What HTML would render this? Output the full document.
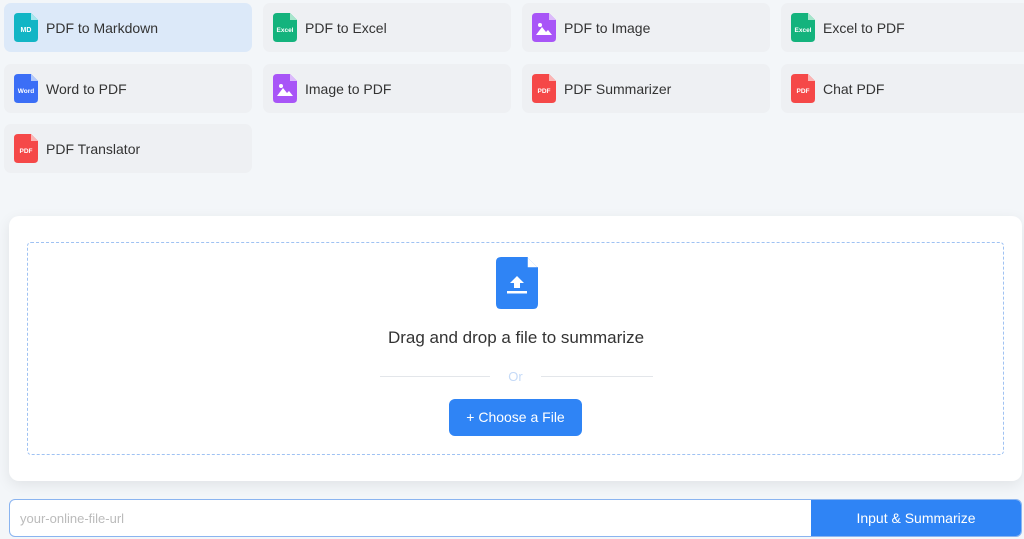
<!DOCTYPE html>
<html><head><meta charset="utf-8"><style>
body{margin:0;width:1024px;height:539px;background:#f3f6f9;font-family:"Liberation Sans",sans-serif;position:relative;overflow:hidden}
.c{position:absolute;width:248px;height:49px;background:#eef0f3;border-radius:7px;box-sizing:border-box}
.c.a{background:#dce9f9}
.c span{position:absolute;left:42px;top:17px;font-size:14px;color:#333}
.c svg{position:absolute;left:10px;top:10px}
.panel{position:absolute;left:9px;top:216px;width:1013px;height:265px;background:#fff;border-radius:10px;box-shadow:0 4px 14px rgba(0,0,0,.08)}
.dash{position:absolute;left:18px;top:26px;width:977px;height:213px;border:1px dashed #9fc2f3;border-radius:4px;box-sizing:border-box}
</style></head><body>
<div class="c a" style="left:4px;top:3px"><svg width="24" height="29" viewBox="0 0 24 29"><path d="M4 0H17L24 7V25Q24 29 20 29H4Q0 29 0 25V4Q0 0 4 0Z" fill="#12b5c5"/><path d="M17 0V7H24Z" fill="#a7e7ee"/><text x="12" y="19" font-size="7" font-weight="bold" fill="#fff" text-anchor="middle" font-family="Liberation Sans">MD</text></svg><span>PDF to Markdown</span></div>
<div class="c" style="left:263px;top:3px"><svg width="24" height="29" viewBox="0 0 24 29"><path d="M4 0H17L24 7V25Q24 29 20 29H4Q0 29 0 25V4Q0 0 4 0Z" fill="#14b37d"/><path d="M17 0V7H24Z" fill="#a6e6cc"/><text x="12" y="19" font-size="6.5" font-weight="bold" fill="#fff" text-anchor="middle" font-family="Liberation Sans">Excel</text></svg><span>PDF to Excel</span></div>
<div class="c" style="left:522px;top:3px"><svg width="24" height="29" viewBox="0 0 24 29"><path d="M4 0H17L24 7V25Q24 29 20 29H4Q0 29 0 25V4Q0 0 4 0Z" fill="#a855f7"/><path d="M17 0V7H24Z" fill="#dcbafc"/><circle cx="8" cy="12" r="2" fill="#fff"/><path d="M4 22L10 14L14 19L16 17L20 22Z" fill="#fff"/></svg><span>PDF to Image</span></div>
<div class="c" style="left:781px;top:3px"><svg width="24" height="29" viewBox="0 0 24 29"><path d="M4 0H17L24 7V25Q24 29 20 29H4Q0 29 0 25V4Q0 0 4 0Z" fill="#14b37d"/><path d="M17 0V7H24Z" fill="#a6e6cc"/><text x="12" y="19" font-size="6.5" font-weight="bold" fill="#fff" text-anchor="middle" font-family="Liberation Sans">Excel</text></svg><span>Excel to PDF</span></div>
<div class="c" style="left:4px;top:64px"><svg width="24" height="29" viewBox="0 0 24 29"><path d="M4 0H17L24 7V25Q24 29 20 29H4Q0 29 0 25V4Q0 0 4 0Z" fill="#3b6ef6"/><path d="M17 0V7H24Z" fill="#b3c9fb"/><text x="12" y="19" font-size="6.5" font-weight="bold" fill="#fff" text-anchor="middle" font-family="Liberation Sans">Word</text></svg><span>Word to PDF</span></div>
<div class="c" style="left:263px;top:64px"><svg width="24" height="29" viewBox="0 0 24 29"><path d="M4 0H17L24 7V25Q24 29 20 29H4Q0 29 0 25V4Q0 0 4 0Z" fill="#a855f7"/><path d="M17 0V7H24Z" fill="#dcbafc"/><circle cx="8" cy="12" r="2" fill="#fff"/><path d="M4 22L10 14L14 19L16 17L20 22Z" fill="#fff"/></svg><span>Image to PDF</span></div>
<div class="c" style="left:522px;top:64px"><svg width="24" height="29" viewBox="0 0 24 29"><path d="M4 0H17L24 7V25Q24 29 20 29H4Q0 29 0 25V4Q0 0 4 0Z" fill="#f54848"/><path d="M17 0V7H24Z" fill="#fbb5b5"/><text x="12" y="19" font-size="6.5" font-weight="bold" fill="#fff" text-anchor="middle" font-family="Liberation Sans">PDF</text></svg><span>PDF Summarizer</span></div>
<div class="c" style="left:781px;top:64px"><svg width="24" height="29" viewBox="0 0 24 29"><path d="M4 0H17L24 7V25Q24 29 20 29H4Q0 29 0 25V4Q0 0 4 0Z" fill="#f54848"/><path d="M17 0V7H24Z" fill="#fbb5b5"/><text x="12" y="19" font-size="6.5" font-weight="bold" fill="#fff" text-anchor="middle" font-family="Liberation Sans">PDF</text></svg><span>Chat PDF</span></div>
<div class="c" style="left:4px;top:124px"><svg width="24" height="29" viewBox="0 0 24 29"><path d="M4 0H17L24 7V25Q24 29 20 29H4Q0 29 0 25V4Q0 0 4 0Z" fill="#f54848"/><path d="M17 0V7H24Z" fill="#fbb5b5"/><text x="12" y="19" font-size="6.5" font-weight="bold" fill="#fff" text-anchor="middle" font-family="Liberation Sans">PDF</text></svg><span>PDF Translator</span></div>
<div class="panel"><div class="dash"></div></div>
<svg style="position:absolute;left:496px;top:257px" width="42" height="52" viewBox="0 0 42 52"><path d="M5 0H31L42 11V47Q42 52 37 52H5Q0 52 0 47V5Q0 0 5 0Z" fill="#2f84f5"/><path d="M31 0V11H42Z" fill="#fff"/><path d="M31 0V11H42" fill="none" stroke="#2f84f5" stroke-width="1.5"/><path d="M21 19L14 26H18V31H24V26H28Z" fill="#fff"/><rect x="11" y="34" width="20" height="2.5" fill="#fff"/></svg>
<div style="position:absolute;left:0;width:1032px;top:328px;text-align:center;font-size:17px;color:#333">Drag and drop a file to summarize</div>
<div style="position:absolute;left:380px;top:376px;width:110px;height:1px;background:#e3e6ea"></div>
<div style="position:absolute;left:541px;top:376px;width:112px;height:1px;background:#e3e6ea"></div>
<div style="position:absolute;left:490px;width:51px;top:369px;text-align:center;font-size:13px;color:#c5daf7">Or</div>
<div style="position:absolute;left:449px;top:399px;width:133px;height:37px;background:#2f84f5;border-radius:6px;color:#fff;font-size:14px;line-height:37px;text-align:center">+ Choose a File</div>
<div style="position:absolute;left:9px;top:499px;width:1013px;height:38px;border:1px solid #8ab4f0;border-radius:6px;box-sizing:border-box;background:#fff;overflow:hidden">
<span style="position:absolute;left:10px;top:11px;font-size:13px;color:#bbb">your-online-file-url</span>
<div style="position:absolute;left:801px;top:0;right:0;bottom:0;background:#2f84f5;color:#fff;font-size:14px;text-align:center;line-height:36px">Input &amp; Summarize</div></div>
</body></html>
